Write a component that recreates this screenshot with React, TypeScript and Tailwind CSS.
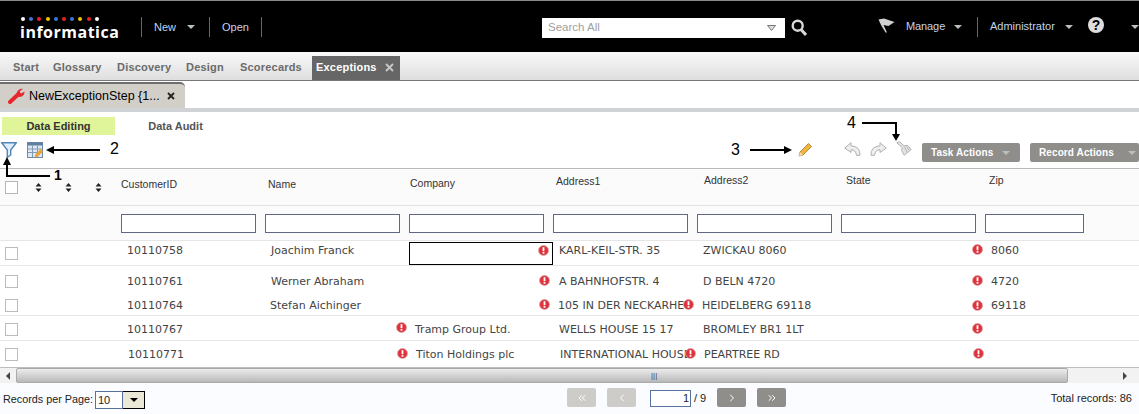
import { ChevronsLeft, ChevronLeft, ChevronRight, ChevronsRight } from "lucide-react"

const arial = "font-['Liberation_Sans',Arial,sans-serif]"
const verdana = "font-['DejaVu_Sans',Verdana,sans-serif]"

const dots = ["#ffffff", "#3b78d8", "#e8202a", "#f5c400", "#3b78d8", "#e8202a", "#3b78d8", "#f5c400", "#e8202a", "#ffffff"]

const columns = [
  { name: "CustomerID", width: "w-[144px]", input: "w-[135px]", head: "pt-[8px] pl-0" },
  { name: "Name", width: "w-[144px]", input: "w-[135px]", head: "pt-[8px] pl-[3px]" },
  { name: "Company", width: "w-[144px]", input: "w-[135px]", head: "pt-[7px] pl-[1px]" },
  { name: "Address1", width: "w-[144px]", input: "w-[135px]", head: "pt-[5px] pl-[3px]" },
  { name: "Address2", width: "w-[144px]", input: "w-[135px]", head: "pt-[4px] pl-[7px]" },
  { name: "State", width: "w-[144px]", input: "w-[135px]", head: "pt-[4px] pl-[5px]" },
  { name: "Zip", width: "w-[100px]", input: "w-[99px]", head: "pt-[4px] pl-[4px]" },
]

// alerts: column index -> class placing the badge inside that cell
const rows = [
  {
    height: "h-[25px]",
    border: "border-b border-[#e6e6e6]",
    text: "pb-[4px]",
    box: "pt-[1px]",
    pad: "pl-[6px]",
    values: ["10110758", "Joachim Franck", "", "KARL-KEIL-STR. 35", "ZWICKAU 8060", "", "8060"],
    alerts: { 2: "left-[129px] top-[4px]", 5: "left-[131px] top-[3px]" } as Record<number, string>,
  },
  {
    height: "h-[27px]",
    border: "",
    text: "pt-[5px]",
    box: "pt-[3px]",
    pad: "pl-[6px]",
    values: ["10110761", "Werner Abraham", "", "A BAHNHOFSTR. 4", "D BELN 4720", "", "4720"],
    alerts: { 2: "left-[130px] top-[9px]", 5: "left-[131px] top-[9px]" } as Record<number, string>,
  },
  {
    height: "h-[23px]",
    border: "border-b border-[#e6e6e6]",
    text: "pt-[4px]",
    box: "pt-[2px]",
    pad: "pl-[5px]",
    values: ["10110764", "Stefan Aichinger", "", "105 IN DER NECKARHEL", "HEIDELBERG 69118", "", "69118"],
    alerts: { 2: "left-[130px] top-[6px]", 3: "left-[130px] top-[6px]", 5: "left-[131px] top-[7px]" } as Record<number, string>,
  },
  {
    height: "h-[25px]",
    border: "border-b border-[#e6e6e6]",
    text: "pt-[4px]",
    box: "pt-[2px]",
    pad: "pl-[6px]",
    values: ["10110767", "", "Tramp Group Ltd.", "WELLS HOUSE 15 17", "BROMLEY BR1 1LT", "", ""],
    alerts: { 1: "left-[131px] top-[6px]", 5: "left-[131px] top-[7px]" } as Record<number, string>,
  },
  {
    height: "h-[26px]",
    border: "",
    text: "pt-[2px]",
    box: "",
    pad: "pl-[7px]",
    values: ["10110771", "", "Titon Holdings plc", "INTERNATIONAL HOUSE", "PEARTREE RD", "", ""],
    alerts: { 1: "left-[132px] top-[7px]", 3: "left-[132px] top-[7px]", 5: "left-[132px] top-[7px]" } as Record<number, string>,
  },
]

function Caret({ className = "" }: { className?: string }) {
  return <span className={`inline-block h-0 w-0 border-x-[4px] border-t-[4px] border-x-transparent border-t-[#bdbdbd] ${className}`} />
}

function Sep() {
  return <span className="h-[20px] w-px bg-[#666]" />
}

function AlertBadge({ className = "" }: { className?: string }) {
  return (
    <svg viewBox="0 0 11 11" className={`absolute z-10 h-[11px] w-[11px] ${className}`}>
      <circle cx="5.5" cy="5.5" r="5" fill="#e0323c" stroke="#d9a8a8" strokeWidth="0.8" />
      <rect x="4.6" y="2.2" width="1.8" height="4" fill="#fff" />
      <rect x="4.6" y="7" width="1.8" height="1.7" fill="#fff" />
    </svg>
  )
}

function SortIcon() {
  return (
    <svg viewBox="0 0 7 9" className="h-[9px] w-[7px]">
      <path d="M3.5 0 L6.5 3.4 H0.5 Z M3.5 9 L6.5 5.6 H0.5 Z" fill="#222" />
    </svg>
  )
}

function PagerButton({ light, children }: { light?: boolean; children: React.ReactNode }) {
  return (
    <span className={`flex h-[19px] w-[29px] items-center justify-center rounded-[2px] text-white ${light ? "bg-[#cdccc8]" : "bg-[#8f8e8b]"}`}>
      {children}
    </span>
  )
}

export default function App() {
  return (
    <div className={`relative h-[414px] w-[1139px] overflow-hidden bg-white text-[11px] ${arial}`}>
      {/* top bar */}
      <header className="flex h-[52px] items-center border-t border-[#8a8a8a] bg-black text-[#c4d4ea]">
        <div className="ml-[20px] flex w-[121px] flex-col pt-[6px]">
          <div className="flex h-[6px] w-[98px] gap-[4.2px] pl-[1px]">
            {dots.map((c, i) => (
              <span key={i} className="h-[4px] w-[4px] rounded-full" style={{ background: c }} />
            ))}
          </div>
          <span className="text-[16px] font-bold leading-[19px] tracking-[0.5px] text-white font-['Open_Sans',sans-serif]">informatica</span>
        </div>
        <Sep />
        <span className="ml-[12px] w-[24px] pt-[2px]">New</span>
        <Caret className="ml-[9px]" />
        <span className="w-[14px]" />
        <Sep />
        <span className="ml-[12px] w-[27px] pt-[2px]">Open</span>
        <span className="w-[12px]" />
        <Sep />
        <div className="ml-[280px] mt-[2px] flex h-[20px] w-[243px] items-center justify-between bg-white pl-[6px] pr-[9px] text-[#a0a0a0]">
          <span className="text-[11.5px]">Search All</span>
          <svg viewBox="0 0 9 6" className="h-[6px] w-[9px]">
            <path d="M0.5 0.5 H8.5 L4.5 5.5 Z" fill="#ddd" stroke="#777" />
          </svg>
        </div>
        <svg viewBox="0 0 16 18" className="ml-[6px] mt-[2px] h-[18px] w-[16px]">
          <circle cx="6.7" cy="6.7" r="5" fill="none" stroke="#d8d8d8" strokeWidth="2.4" />
          <path d="M10 10.5 L15 16" stroke="#d8d8d8" strokeWidth="3" />
        </svg>
        <svg viewBox="0 0 17 15" className="ml-[71px] -mt-[2px] h-[15px] w-[17px]">
          <path d="M0.5 1.5 L6 0.5 L16.5 4 L10.5 8 L5.5 7 L9 14.5 L7.5 14.5 L3 7 Z" fill="#d0d0d0" />
        </svg>
        <span className="ml-[11px] w-[38px] tracking-[-0.1px]">Manage</span>
        <Caret className="ml-[10px]" />
        <span className="w-[15px]" />
        <Sep />
        <span className="ml-[12px] w-[64px]">Administrator</span>
        <Caret className="ml-[11px]" />
        <span className="ml-[15px] -mt-[3px] flex h-[16px] w-[16px] items-center justify-center rounded-full bg-[#ddd] text-[14px] font-bold leading-none text-black">?</span>
        <Caret className="ml-[27px]" />
      </header>

      {/* main nav */}
      <nav className="flex h-[29px] items-stretch border-b border-[#777] bg-gradient-to-b from-[#fafafa] to-[#dedede] pl-[13px] text-[11px] font-bold tracking-[0.2px] text-[#6b6b6b]">
        <span className="flex w-[40px] items-center pt-[2px]">Start</span>
        <span className="flex w-[64px] items-center pt-[2px]">Glossary</span>
        <span className="flex w-[69px] items-center pt-[2px]">Discovery</span>
        <span className="flex w-[54px] items-center pt-[2px]">Design</span>
        <span className="flex w-[72px] items-center pt-[2px]">Scorecards</span>
        <span className="mt-[4px] flex w-[88px] items-center gap-[8px] bg-[#666] pb-[2px] pl-[4px] text-white">
          Exceptions
          <svg viewBox="0 0 9 9" className="h-[9px] w-[9px]">
            <path d="M1 1 L8 8 M8 1 L1 8" stroke="#c8c8c8" strokeWidth="1.8" />
          </svg>
        </span>
      </nav>

      {/* open tab */}
      <div className="flex h-[27px] items-end pt-[1px]">
        <div className="flex h-[26px] w-[185px] items-center rounded-tr-[5px] border-t-[2px] border-[#6e6e6e] bg-[#d2cfc9] pl-[8px] text-[12.5px] text-black">
          <svg viewBox="0 0 17 16" className="h-[16px] w-[17px] shrink-0">
            <path d="M2 14 L10 6.5" stroke="#e8272c" strokeWidth="4" strokeLinecap="round" />
            <path d="M8.5 7.5 Q8 2.5 13 0.8 L15 0.8 L11.6 3.4 L13 5.6 L16.6 3.4 Q16.6 8 11.5 9 Z" fill="#e8272c" />
          </svg>
          <span className="ml-[4px] w-[138px] whitespace-nowrap">NewExceptionStep {"{"}1...</span>
          <svg viewBox="0 0 8 8" className="h-[8px] w-[8px]">
            <path d="M1 1 L7 7 M7 1 L1 7" stroke="#222" strokeWidth="1.8" />
          </svg>
        </div>
      </div>
      <div className="h-[4px] bg-[#cfd3d6]" />

      {/* sub tabs */}
      <div className="mt-[5px] flex h-[18px] pl-[2px] text-[11px] font-bold text-[#555]">
        <span className="flex w-[113px] items-center justify-center bg-[#e0f59a] text-[#333]">Data Editing</span>
        <span className="flex w-[120px] items-center justify-center pl-[1px]">Data Audit</span>
      </div>

      {/* toolbar */}
      <div className="flex h-[33px] items-start">
        <svg viewBox="0 0 16 16" className="ml-[1px] mt-[7px] h-[16px] w-[16px]">
          <path d="M0.7 0.7 H15.3 L9.7 8 V13 L6.3 15.3 V8 Z" fill="#dfeefa" stroke="#4f86b3" strokeWidth="1.4" />
        </svg>
        <svg viewBox="0 0 16 16" className="ml-[10px] mt-[7px] h-[16px] w-[16px]">
          <rect x="0.5" y="0.5" width="15" height="15" fill="#dfe8f2" stroke="#6f8aa6" />
          <rect x="0.5" y="0.5" width="15" height="3" fill="#5f7f9f" />
          <path d="M5.5 3.5 V15 M10.5 3.5 V15 M1 7 H15 M1 10.5 H15" stroke="#7f9ab5" />
          <path d="M7.5 15.5 L8.5 12 L13.5 7 L16 9.5 L11 14.5 Z" fill="#e8a33a" />
        </svg>
        <svg viewBox="0 0 15 15" className="ml-[755px] mt-[7px] h-[15px] w-[15px]">
          <path d="M1 14 L2 10 L10.5 1.5 L13.5 4.5 L5 13 Z" fill="#f0b43c" stroke="#a8772a" strokeWidth="0.8" />
          <path d="M1 14 L2 10 L5 13 Z" fill="#f3dcb0" />
        </svg>
        <svg viewBox="0 0 17 14" className="ml-[31px] mt-[7px] h-[14px] w-[17px]">
          <path d="M7 0.7 L0.8 6 L7 10.5 V7.8 Q11.5 7.5 12.5 13.3 H16 Q16.5 4.5 7 3.8 Z" fill="#eeeeee" stroke="#b0b0b0" />
        </svg>
        <svg viewBox="0 0 17 14" className="ml-[9px] mt-[7px] h-[14px] w-[17px]">
          <path d="M10 0.7 L16.2 6 L10 10.5 V7.8 Q5.5 7.5 4.5 13.3 H1 Q0.5 4.5 10 3.8 Z" fill="#eeeeee" stroke="#b0b0b0" />
        </svg>
        <svg viewBox="0 0 16 15" className="ml-[9px] mt-[6px] h-[15px] w-[16px]">
          <path d="M0.8 1.8 L3.5 0.6 L8 4.8 L11.5 4.2 L15.2 8.5 L8.2 14.2 L5.5 9.5 L6.2 6.5 Z" fill="#e2e2e2" stroke="#a4a4a4" strokeWidth="0.8" />
          <path d="M8.5 6 L11 11 M10.5 5.5 L13 9" stroke="#b8b8b8" />
        </svg>
        <span className="ml-[10px] mt-[8px] flex h-[19px] w-[98px] items-center justify-between rounded-[2px] bg-[#8f8e8b] pl-[9px] pr-[10px] text-[10px] font-bold tracking-[0.1px] text-white">
          Task Actions <Caret className="border-t-[#555]" />
        </span>
        <span className="ml-[10px] mt-[8px] flex h-[19px] w-[109px] items-center justify-between rounded-[2px] bg-[#8f8e8b] pl-[9px] pr-[3px] text-[10px] font-bold tracking-[0.1px] text-white">
          Record Actions <Caret className="border-t-[#555]" />
        </span>
      </div>

      {/* grid */}
      <div className="flex h-[38px] border-y border-y-[#bbb] border-b-[#e3e3e3] bg-[#fbfbfb] text-[10.5px] text-[#333]">
        <div className="flex w-[121px] shrink-0 items-center pl-[5px]">
          <span className="h-[13px] w-[13px] border border-[#b5b5b5] bg-white" />
          <span className="ml-[17px]"><SortIcon /></span>
          <span className="ml-[23px]"><SortIcon /></span>
          <span className="ml-[23px]"><SortIcon /></span>
        </div>
        {columns.map((c) => (
          <div key={c.name} className={`${c.width} ${c.head} shrink-0`}>{c.name}</div>
        ))}
      </div>

      <div className="flex h-[35px] items-start border-b border-[#e6e6e6] bg-[#fbfbfb] pt-[8px]">
        <div className="w-[121px] shrink-0" />
        {columns.map((c) => (
          <div key={c.name} className={`${c.width} shrink-0`}>
            <div className={`${c.input} h-[19px] border border-[#5d6a80] bg-white`} />
          </div>
        ))}
      </div>

      {rows.map((row, r) => (
        <div key={r} className={`flex items-center ${row.height} ${row.border} bg-white text-[11px] text-[#444] ${verdana}`}>
          <div className={`w-[121px] shrink-0 pl-[5px] ${row.box}`}>
            <span className="block h-[13px] w-[13px] border border-[#bcbcbc] bg-white" />
          </div>
          {row.values.map((v, i) => (
            <div key={i} className={`relative flex h-full items-center ${i === 0 || i === 6 ? (r === 4 && i === 0 ? "pl-[7px]" : "pl-[6px]") : row.pad} ${row.text} ${columns[i].width} shrink-0 whitespace-nowrap`}>
              {r === 0 && i === 2 && <span className="absolute left-0 top-[1px] h-[23px] w-[144px] border border-black" />}
              {v}
              {row.alerts[i] && <AlertBadge className={row.alerts[i]} />}
            </div>
          ))}
        </div>
      ))}

      {/* horizontal scrollbar */}
      <div className="flex h-[16px] items-center border-t border-[#bdbdbd] bg-[#f2f2f2]">
        <span className="flex w-[16px] justify-center">
          <span className="h-0 w-0 border-y-[4px] border-r-[4px] border-y-transparent border-r-[#444]" />
        </span>
        <div className="flex h-[15px] w-[1052px] items-center rounded-[2px] border border-[#aaa] bg-gradient-to-b from-[#ececec] to-[#b9b9b9] pl-[634px] text-[8px] leading-none text-[#444]">
          <span>|||</span>
        </div>
        <span className="ml-[55px] h-0 w-0 border-y-[4px] border-l-[4px] border-y-transparent border-l-[#444]" />
      </div>

      {/* footer */}
      <footer className="flex h-[31px] items-center bg-[#fbfcff] text-[11px] text-[#222]">
        <span className="ml-[3px] w-[92px] pt-[1px] text-[10.8px]">Records per Page:</span>
        <div className="mt-[3px] flex h-[18px] w-[50px]">
          <span className="flex w-[28px] items-center border border-[#5872a0] bg-white pl-[2px] text-[11px]">10</span>
          <span className="flex w-[22px] items-center justify-center border border-black border-l-0 bg-[#ebe8d8]">
            <span className="h-0 w-0 border-x-[4px] border-t-[4px] border-x-transparent border-t-black" />
          </span>
        </div>
        <div className="ml-[422px] -mt-[2px]"><PagerButton light><ChevronsLeft size={12} /></PagerButton></div>
        <div className="ml-[11px] -mt-[2px]"><PagerButton light><ChevronLeft size={12} /></PagerButton></div>
        <span className="ml-[14px] flex h-[17px] w-[41px] items-center justify-end border border-[#5872a0] bg-white pr-[1px] text-[11px]">1</span>
        <span className="ml-[3px] w-[23px] text-[11px]">/ 9</span>
        <div className="-mt-[2px]"><PagerButton><ChevronRight size={12} /></PagerButton></div>
        <div className="ml-[11px] -mt-[2px]"><PagerButton><ChevronsRight size={12} /></PagerButton></div>
        <span className="ml-auto mr-[7px]">Total records: 86</span>
      </footer>

      {/* callout annotations */}
      <svg viewBox="0 0 1139 414" className="pointer-events-none absolute left-0 top-0 h-[414px] w-[1139px]">
        <g fill="none" stroke="#000" strokeWidth="2">
          <path d="M7 162 V176 H50" />
          <path d="M52 150 H100" />
          <path d="M750 150 H785" />
          <path d="M862 123 H896 V134" />
        </g>
        <g fill="#000">
          <path d="M7 157 L3 165 H11 Z" />
          <path d="M46 150 L54 146 V154 Z" />
          <path d="M792 150 L784 146 V154 Z" />
          <path d="M896 141 L892 134 H900 Z" />
        </g>
      </svg>
      <span className="absolute left-[54px] top-[167px] text-[14px] font-bold leading-4 text-black">1</span>
      <span className="absolute left-[110px] top-[141px] text-[16px] leading-4 text-black">2</span>
      <span className="absolute left-[731px] top-[142px] text-[16px] leading-4 text-black">3</span>
      <span className="absolute left-[847px] top-[115px] text-[16px] leading-4 text-black">4</span>
    </div>
  )
}
